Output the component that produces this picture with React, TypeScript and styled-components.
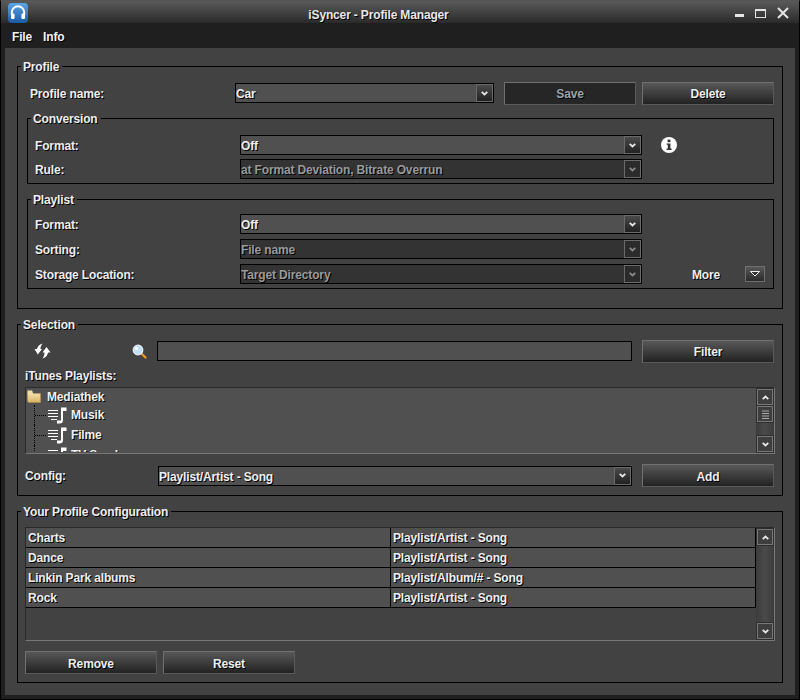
import React from 'react';
import styled, { createGlobalStyle } from 'styled-components';

const GlobalStyle = createGlobalStyle`
  html, body { margin: 0; padding: 0; background: #1f1f1f; }
  * { box-sizing: border-box; }
`;

const CONFIG_ROWS = [
  ['Charts', 'Playlist/Artist - Song'],
  ['Dance', 'Playlist/Artist - Song'],
  ['Linkin Park albums', 'Playlist/Album/# - Song'],
  ['Rock', 'Playlist/Artist - Song'],
];

const Chevron = ({ up, dim }: { up?: boolean; dim?: boolean }) => (
  <svg width="7" height="5" viewBox="0 0 7 5" style={{ transform: up ? 'scaleY(-1)' : undefined }}>
    <path d="M0.7 0.8 L3.5 3.4 L6.3 0.8" fill="none" stroke={dim ? '#8a8a8a' : '#e8e8e8'} strokeWidth="1.8" />
  </svg>
);

const Select = ({ value, width, disabled }: { value: string; width: number; disabled?: boolean }) => (
  <SelectBox $width={width} $disabled={disabled}>
    <SelectValue $disabled={disabled}>{value}</SelectValue>
    <SelectArrow $disabled={disabled}>
      <Chevron dim={disabled} />
    </SelectArrow>
  </SelectBox>
);

const Logo = () => (
  <svg width="20" height="20" viewBox="0 0 20 20">
    <defs>
      <linearGradient id="logoBg" x1="0" y1="0" x2="0" y2="1">
        <stop offset="0" stopColor="#5da6e6" />
        <stop offset="1" stopColor="#1a5aa8" />
      </linearGradient>
    </defs>
    <rect width="20" height="20" rx="4" fill="url(#logoBg)" />
    <path d="M3.8 12 V9.5 A6.2 6.2 0 0 1 16.2 9.5 V12" fill="none" stroke="#fff" strokeWidth="2" />
    <rect x="3" y="10.5" width="3.6" height="5.5" rx="1.2" fill="#fff" />
    <rect x="13.4" y="10.5" width="3.6" height="5.5" rx="1.2" fill="#fff" />
  </svg>
);

const SyncIcon = () => (
  <svg width="17" height="16" viewBox="0 0 17 16">
    <path d="M0.5 6 L3 6 C3.5 3.5 5 1.5 8.5 0.5 C7 2.5 6.5 4 6.5 6 L8 6 L3.8 11.5 Z" fill="#fff" />
    <path d="M16.5 9.5 L14 9.5 C13.5 12.5 12 14.5 8.5 15.5 C10 13.5 10.5 11.5 10.5 9.5 L8.5 9.5 L12.5 4 Z" fill="#fff" />
  </svg>
);

const SearchIcon = () => (
  <svg width="15" height="15" viewBox="0 0 15 15">
    <path d="M9 9 L13.5 13.5" stroke="#f09a2a" strokeWidth="2.2" strokeLinecap="round" />
    <circle cx="6" cy="6" r="4.8" fill="#bfe0fa" stroke="#e8eef5" strokeWidth="1.2" />
    <circle cx="4.6" cy="4.6" r="1.6" fill="#fff" />
  </svg>
);

const FolderIcon = () => (
  <svg width="14" height="13" viewBox="0 0 14 13">
    <defs>
      <linearGradient id="folderBg" x1="0" y1="0" x2="0" y2="1">
        <stop offset="0" stopColor="#f8e8b8" />
        <stop offset="1" stopColor="#d8b060" />
      </linearGradient>
    </defs>
    <path d="M0.5 2 L5 2 L6.5 3.5 L13.5 3.5 L13.5 12.5 L1.5 12.5 L0.5 11 Z" fill="url(#folderBg)" stroke="#b89450" strokeWidth="0.5" />
    <path d="M0.5 0.5 L5 0.5 L6 2.5 L0.5 2.5 Z" fill="#f3dda0" />
  </svg>
);

const PlaylistIcon = () => (
  <svg width="19" height="17" viewBox="0 0 19 17">
    <path d="M0 3.5 H10 M0 6.5 H10 M0 9.5 H10 M3 12.5 H9" stroke="#fff" strokeWidth="1" />
    <path d="M13 0.5 H18.5 V4 H15 V13 Q15 16.5 11.5 16.5 H9 V13.5 H13 Z" fill="#fff" />
  </svg>
);

const InfoIcon = () => (
  <svg width="16" height="16" viewBox="0 0 16 16">
    <circle cx="8" cy="8" r="8" fill="#fff" />
    <rect x="6.6" y="2.6" width="2.8" height="2.6" fill="#333" />
    <path d="M5.6 6.4 H9.4 V11.6 H10.6 V13 H5.6 V11.6 H6.8 V7.8 H5.6 Z" fill="#333" />
  </svg>
);

const TreeRows = () => (
  <Tree>
    <TreeRoot>
      <FolderIcon />
      <TreeLabel>Mediathek</TreeLabel>
    </TreeRoot>
    {['Musik', 'Filme', 'TV-Sendungen'].map(name => (
      <TreeItem key={name}>
        <PlaylistIcon />
        <TreeLabel>{name}</TreeLabel>
      </TreeItem>
    ))}
  </Tree>
);

export default function App() {
  return (
    <>
      <GlobalStyle />
      <Window>
        <TitleBar>
          <LogoSlot>
            <Logo />
          </LogoSlot>
          <Title>iSyncer - Profile Manager</Title>
          <WindowControls>
            <svg width="10" height="12" viewBox="0 0 10 12">
              <rect x="1" y="7" width="9" height="3" fill="#e4e4e4" />
            </svg>
            <svg width="11" height="12" viewBox="0 0 11 12">
              <rect x="0.5" y="2.5" width="10" height="8" fill="none" stroke="#e4e4e4" />
              <rect x="0" y="2" width="11" height="2" fill="#e4e4e4" />
            </svg>
            <svg width="12" height="12" viewBox="0 0 12 12">
              <path d="M1 1 L11 11 M11 1 L1 11" stroke="#e4e4e4" strokeWidth="2" />
            </svg>
          </WindowControls>
        </TitleBar>
        <MenuBar>
          <MenuItem>File</MenuItem>
          <MenuItem>Info</MenuItem>
        </MenuBar>
        <Panel>
          <Group $height={251}>
            <GroupLegend>Profile</GroupLegend>
            <ProfileRow>
              <Label>Profile name:</Label>
              <Select value="Car" width={259} />
              <SaveButton disabled>Save</SaveButton>
              <Button>Delete</Button>
            </ProfileRow>
            <SubGroup $height={74} $top={5} $padTop={7}>
              <SubLegend>Conversion</SubLegend>
              <FormRow>
                <Label>Format:</Label>
                <Select value="Off" width={402} />
                <InfoSlot>
                  <InfoIcon />
                </InfoSlot>
              </FormRow>
              <FormRow>
                <Label>Rule:</Label>
                <Select value="at Format Deviation, Bitrate Overrun" width={402} disabled />
              </FormRow>
            </SubGroup>
            <SubGroup $height={98} $top={7} $padTop={5}>
              <SubLegend>Playlist</SubLegend>
              <FormRow $gap={1}>
                <Label>Format:</Label>
                <Select value="Off" width={402} />
              </FormRow>
              <FormRow $gap={1}>
                <Label>Sorting:</Label>
                <Select value="File name" width={402} disabled />
              </FormRow>
              <FormRow>
                <Label>Storage Location:</Label>
                <Select value="Target Directory" width={402} disabled />
                <MoreLabel>More</MoreLabel>
                <MoreButton>
                  <svg width="10" height="6" viewBox="0 0 10 6">
                    <path d="M0.5 0.5 H9.5 L5 5 Z" fill="#333" stroke="#eee" />
                  </svg>
                </MoreButton>
              </FormRow>
            </SubGroup>
          </Group>
          <Group $height={180}>
            <GroupLegend>Selection</GroupLegend>
            <SearchRow>
              <SyncSlot>
                <SyncIcon />
              </SyncSlot>
              <SearchSlot>
                <SearchIcon />
              </SearchSlot>
              <SearchInput />
              <Button>Filter</Button>
            </SearchRow>
            <ListCaption>iTunes Playlists:</ListCaption>
            <ListFrame>
              <TreeRows />
              <ScrollBar>
                <ScrollButton>
                  <Chevron up />
                </ScrollButton>
                <ScrollThumb>
                  <svg width="7" height="9" viewBox="0 0 7 9">
                    <path d="M0 1 H7 M0 3.5 H7 M0 6 H7 M0 8.5 H7" stroke="#aaa" />
                  </svg>
                </ScrollThumb>
                <ScrollTrack />
                <ScrollButton>
                  <Chevron />
                </ScrollButton>
              </ScrollBar>
            </ListFrame>
            <ConfigRow>
              <Label>Config:</Label>
              <Select value="Playlist/Artist - Song" width={474} />
              <Button>Add</Button>
            </ConfigRow>
          </Group>
          <Group $height={180}>
            <GroupLegend>Your Profile Configuration</GroupLegend>
            <TableFrame>
              <TableBody>
                {CONFIG_ROWS.map(([name, rule]) => (
                  <TableRow key={name}>
                    <TableCell>{name}</TableCell>
                    <TableCell>{rule}</TableCell>
                  </TableRow>
                ))}
              </TableBody>
              <ScrollBar>
                <ScrollButton>
                  <Chevron up />
                </ScrollButton>
                <ScrollTrack />
                <ScrollButton>
                  <Chevron />
                </ScrollButton>
              </ScrollBar>
            </TableFrame>
            <ActionRow>
              <Button>Remove</Button>
              <Button>Reset</Button>
            </ActionRow>
          </Group>
        </Panel>
      </Window>
    </>
  );
}

const Window = styled.div`
  width: 800px;
  height: 700px;
  display: flex;
  flex-direction: column;
  background: #1f1f1f;
  border: 1px solid #000;
  border-top-color: #555;
  font-family: 'Liberation Sans', Arial, sans-serif;
  font-size: 12px;
  font-weight: bold;
  letter-spacing: -0.15px;
  color: #eee;
  text-shadow: 1px 1px 0 #000;
  overflow: hidden;
`;

const TitleBar = styled.div`
  height: 22px;
  flex: none;
  display: flex;
  position: relative;
  background: linear-gradient(#5a5a5a, #2a2a2a);
`;

const LogoSlot = styled.div`
  margin: 2px 0 0 7px;
  display: flex;
`;

const Title = styled.div`
  position: absolute;
  left: 0;
  right: 43px;
  top: 7px;
  text-align: center;
  color: #e8e8e8;
`;

const WindowControls = styled.div`
  margin: 6px 10px 0 auto;
  display: flex;
  align-items: flex-start;
  gap: 11px;
`;

const MenuBar = styled.div`
  height: 25px;
  flex: none;
  display: flex;
  align-items: center;
  gap: 11px;
  padding: 3px 0 0 11px;
`;

const MenuItem = styled.div`
  color: #f2f2f2;
`;

const Panel = styled.div`
  flex: 1;
  margin: 0 4px 4px;
  padding: 10px 12px;
  display: flex;
  flex-direction: column;
  gap: 7px;
  background: #424242;
`;

const Group = styled.fieldset<{ $height: number }>`
  height: ${p => p.$height}px;
  width: 766px;
  min-width: 0;
  margin: 0;
  padding: 0 7px;
  border: 1px solid #000;
  flex: none;
`;

const SubGroup = styled.fieldset<{ $height: number; $top: number; $padTop: number }>`
  height: ${p => p.$height}px;
  width: 747px;
  min-width: 0;
  margin: ${p => p.$top}px 0 0 2px;
  padding: ${p => p.$padTop}px 6px 0;
  border: 1px solid #000;
`;

const GroupLegend = styled.legend`
  margin-left: -4px;
  padding: 2px 3px 0 2px;
  line-height: 14px;
  color: #eee;
`;

const SubLegend = styled(GroupLegend)`
  margin-left: -3px;
`;

const Label = styled.div`
  color: #eee;
  padding-top: 2px;
`;

const ProfileRow = styled.div`
  display: grid;
  grid-template-columns: 205px 269px 138px 132px;
  align-items: center;
  height: 24px;
  margin: 7px 0 0 5px;
`;

const FormRow = styled.div<{ $gap?: number }>`
  display: grid;
  grid-template-columns: 205px 402px 50px 53px 20px;
  align-items: center;
  height: 24px;
  margin-bottom: ${p => p.$gap ?? 0}px;
  padding-left: 1px;
`;

const SelectBox = styled.div<{ $width: number; $disabled?: boolean }>`
  width: ${p => p.$width}px;
  height: 20px;
  display: flex;
  align-items: center;
  border: 1px solid #000;
  background: ${p => (p.$disabled ? '#333' : '#505050')};
`;

const SelectValue = styled.div<{ $disabled?: boolean }>`
  flex: 1;
  padding-top: 2px;
  white-space: nowrap;
  color: ${p => (p.$disabled ? '#9a9a9a' : '#eee')};
`;

const SelectArrow = styled.div<{ $disabled?: boolean }>`
  width: 17px;
  height: 18px;
  display: flex;
  align-items: center;
  justify-content: center;
  border: 1px solid #6a6a6a;
  background: ${p => (p.$disabled ? '#2b2b2b' : 'linear-gradient(#4a4a4a, #222)')};
`;

const Button = styled.button`
  width: 132px;
  height: 23px;
  padding: 2px 0 0;
  font: inherit;
  letter-spacing: inherit;
  color: #eee;
  text-shadow: inherit;
  border: 1px solid #707070;
  border-right-color: #5a5a5a;
  border-bottom-color: #5a5a5a;
  background: linear-gradient(#585858, #222);
`;

const SaveButton = styled(Button)`
  color: #9ca3a8;
  background: #262626;
`;

const InfoSlot = styled.div`
  padding-left: 19px;
  display: flex;
`;

const MoreLabel = styled.div`
  grid-column: 4;
  padding-top: 2px;
`;

const MoreButton = styled.div`
  grid-column: 5;
  width: 20px;
  height: 16px;
  display: flex;
  align-items: center;
  justify-content: center;
  border: 1px solid #707070;
  background: linear-gradient(#585858, #2a2a2a);
`;

const SearchRow = styled.div`
  display: grid;
  grid-template-columns: 107px 25px 485px 132px;
  align-items: center;
  height: 24px;
  margin-top: 7px;
`;

const SyncSlot = styled.div`
  padding-left: 9px;
  display: flex;
`;

const SearchSlot = styled.div`
  display: flex;
`;

const SearchInput = styled.div`
  width: 475px;
  height: 20px;
  border: 1px solid #000;
  background: #505050;
`;

const ListCaption = styled.div`
  margin-top: 6px;
  height: 15px;
  line-height: 15px;
`;

const ListFrame = styled.div`
  width: 750px;
  height: 67px;
  margin-top: 3px;
  display: flex;
  border: 1px solid #777;
  border-top-color: #2a2a2a;
  border-left-color: #2a2a2a;
  background: #505050;
`;

const Tree = styled.div`
  flex: 1;
  overflow: hidden;
  margin-bottom: 1px;
  padding-left: 1px;
  position: relative;
`;

const TreeRoot = styled.div`
  height: 17px;
  display: flex;
  align-items: center;
  gap: 6px;
`;

const TreeItem = styled.div`
  height: 20px;
  display: flex;
  align-items: center;
  gap: 4px;
  padding-left: 21px;
  position: relative;

  &::before {
    content: '';
    position: absolute;
    left: 7px;
    top: 0;
    bottom: 0;
    border-left: 1px dotted #000;
  }

  &::after {
    content: '';
    position: absolute;
    left: 8px;
    top: 10px;
    width: 11px;
    border-top: 1px dotted #000;
  }
`;

const TreeLabel = styled.span`
  color: #f0f0f0;
  white-space: nowrap;
`;

const ScrollBar = styled.div`
  width: 18px;
  flex: none;
  display: flex;
  flex-direction: column;
  background: linear-gradient(90deg, #3c3c3c, #4a4a4a 50%, #3c3c3c);
`;

const ScrollButton = styled.div`
  width: 16px;
  height: 16px;
  margin: 1px;
  flex: none;
  display: flex;
  align-items: center;
  justify-content: center;
  border: 1px solid #777;
  background: #3e3e3e;
  box-shadow: 0 0 0 1px #2e2e2e;
`;

const ScrollThumb = styled(ScrollButton)`
  margin-top: 0;
`;

const ScrollTrack = styled.div`
  flex: 1;
`;

const ConfigRow = styled.div`
  display: grid;
  grid-template-columns: 133px 484px 132px;
  align-items: center;
  height: 23px;
  margin-top: 10px;

  & > ${Label} {
    padding-top: 0;
  }
`;

const TableFrame = styled.div`
  width: 750px;
  height: 114px;
  margin-top: 8px;
  display: flex;
  border: 1px solid #777;
  border-top-color: #2a2a2a;
  border-left-color: #2a2a2a;
  background: #424242;
`;

const TableBody = styled.div`
  flex: 1;
`;

const TableRow = styled.div`
  display: grid;
  grid-template-columns: 365px 365px;
  height: 20px;
`;

const TableCell = styled.div`
  height: 20px;
  line-height: 21px;
  padding-left: 2px;
  background: #505050;
  border-bottom: 1px solid #000;
  border-right: 1px solid #000;
  white-space: nowrap;
`;

const ActionRow = styled.div`
  display: flex;
  gap: 6px;
  margin-top: 10px;
`;
